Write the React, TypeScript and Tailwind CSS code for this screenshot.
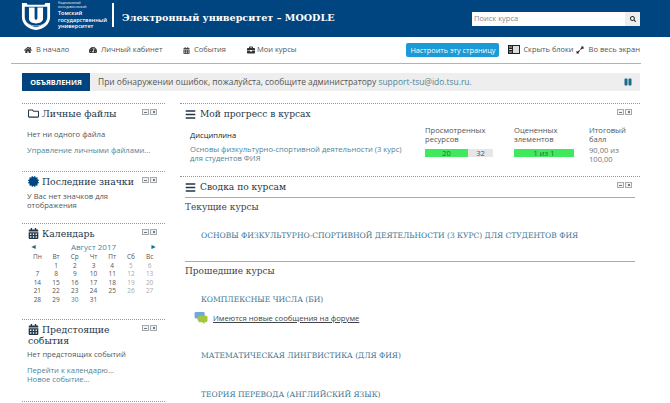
import { FaBars, FaBriefcase, FaCalendarAlt, FaCertificate, FaExpandAlt, FaHome, FaPause, FaRegFolder, FaSearch, FaTachometerAlt } from "react-icons/fa";
import type { ReactNode } from "react";

const serif = "font-['DejaVu_Serif',serif]";
const courseLink = `${serif} text-[7.55px] leading-[11px] text-[#3f7590]`;

function BlockControls() {
  return (
    <div className="flex gap-px pt-[1px]">
      <span className="flex h-[6px] w-[7px] items-center justify-center border border-[#a3abb0] bg-[#f2f2f2]">
        <span className="h-px w-[3px] bg-[#777]" />
      </span>
      <span className="flex h-[6px] w-[7px] items-center justify-center border border-[#a3abb0] bg-[#f2f2f2]">
        <span className="h-[2px] w-[2px] bg-[#777]" />
      </span>
    </div>
  );
}

function SideBlock({ icon, title, className, children }: { icon: ReactNode; title: string; className: string; children: ReactNode }) {
  return (
    <section className={`border-t border-dotted border-[#8f989d] px-[5px] ${className}`}>
      <div className="flex items-start justify-between pr-[3px] pl-px pt-[4px]">
        <h3 className={`${serif} w-[112px] text-[9.3px] leading-[11px] text-[#22364a]`}>
          <span className="mr-[3px] inline-block align-[-2px]">{icon}</span>
          {title}
        </h3>
        <BlockControls />
      </div>
      {children}
    </section>
  );
}

const days = [
  ["", "1", "2", "3", "4", "5", "6"],
  ["7", "8", "9", "10", "11", "12", "13"],
  ["14", "15", "16", "17", "18", "19", "20"],
  ["21", "22", "23", "24", "25", "26", "27"],
  ["28", "29", "30", "31", "", "", ""],
];

function CalendarGrid() {
  return (
    <div className="mt-[3px] px-px">
      <div className="flex items-center justify-between px-[2px] text-[8px] leading-[10px] text-[#4f8397]">
        <span className="text-[7px] text-[#1d6a8a]">◄</span>
        <span>Август 2017</span>
        <span className="text-[7px] text-[#1d6a8a]">►</span>
      </div>
      <div className="mt-px grid grid-cols-7 text-center text-[6.5px] leading-[8.6px] text-[#555]">
        {["Пн", "Вт", "Ср", "Чт", "Пт", "Сб", "Вс"].map((d) => (
          <span key={d}>{d}</span>
        ))}
        {days.flat().map((d, i) => (
          <span key={i} className={i % 7 >= 5 ? "text-[#aaa]" : d === "30" ? "text-[#4f8397]" : "text-[#555]"}>
            {d}
          </span>
        ))}
      </div>
    </div>
  );
}

function Logo() {
  return (
    <div className="flex h-full items-start">
      <svg width="30" height="31" viewBox="0 0 32 31" className="ml-[21px] mt-[1px]">
        <path d="M1 1h5l1 2h18l1-2h5v15c0 8-7 13-15 14C8 29 1 24 1 16z" fill="#fff" />
        <path d="M4 5h24v11c0 6-6 10-12 11C10 26 4 22 4 16z" fill="#00457f" />
        <path d="M8.500 6h6v11c0 2.500 3 2.500 3 0V6h6v12c0 6.500-15 6.500-15 0z" fill="#fff" />
        <path d="M7 23c5 3.500 13 3.500 18 0" stroke="#fff" strokeWidth="0.7" fill="none" />
      </svg>
      <div className="ml-[7px] w-[54px] pt-[1px] text-[5.5px] leading-[6.5px] font-semibold whitespace-nowrap text-white">
        <div className="mb-[1px] text-[3px] leading-[4px] font-normal">
          Национальный
          <br />
          исследовательский
        </div>
        Томский
        <br />
        государственный
        <br />
        университет
      </div>
      <div className="mt-[3px] h-[24px] w-[2px] bg-white" />
    </div>
  );
}

export default function App() {
  return (
    <div className="h-[403px] w-[670px] overflow-hidden bg-white font-['Open_Sans',sans-serif] text-[#555]">
      <header className="flex h-[37px] items-center bg-[#00457f]">
        <Logo />
        <span className={`${serif} ml-[8px] text-[9.6px] font-bold text-white`}>Электронный университет – MOODLE</span>
        <div className="ml-auto mr-[30px] flex h-[14px] w-[168px] items-center bg-white pl-[2px] text-[7.5px] text-[#888]">
          Поиск курса
          <span className="ml-auto flex h-full w-[15px] items-center justify-center bg-[#eee]">
            <FaSearch className="size-[6px] text-[#222]" />
          </span>
        </div>
      </header>

      <nav className="mx-[11px] flex h-[27px] w-[630px] items-center border-b border-[#a9b7bd] pl-[13px] pr-px text-[7.5px] text-[#555]">
        <span className="flex w-[65px] items-center gap-[4px]">
          <FaHome className="size-[8px] text-[#333]" />В начало
        </span>
        <span className="flex w-[94px] items-center gap-[4px]">
          <FaTachometerAlt className="size-[8px] text-[#333]" />
          Личный кабинет
        </span>
        <span className="flex w-[64px] items-center gap-[4px]">
          <FaCalendarAlt className="size-[7px] text-[#444]" />
          События
        </span>
        <span className="flex items-center gap-[2px]">
          <FaBriefcase className="size-[8px] text-[#333]" />
          Мои курсы
        </span>
        <span className="ml-auto rounded-[2px] bg-[#1a9ad6] px-[4px] py-[2px] text-[7.3px] leading-[10px] text-white">
          Настроить эту страницу
        </span>
        <span className="ml-[9px] flex items-center gap-[3px] text-[7.4px]">
          <svg width="12" height="9" viewBox="0 0 12 9">
            <rect width="12" height="9" fill="#222" />
            <path d="M1 2h3M1 4.500h3M1 7h3" stroke="#fff" strokeWidth="0.8" />
            <rect x="5" y="1" width="6" height="7" fill="#ddd" />
          </svg>
          Скрыть блоки
        </span>
        <span className="ml-[3px] flex items-center gap-[4px] text-[7.6px]">
          <FaExpandAlt className="size-[8px] text-[#222]" />
          Во весь экран
        </span>
      </nav>

      <div className="mx-[22px] mt-[9px] flex h-[18px] w-[618px] items-stretch text-[8.45px]">
        <div className="flex w-[68px] items-center justify-center bg-[#00457f] text-[7.3px] font-bold text-white">ОБЪЯВЛЕНИЯ</div>
        <div className="flex flex-1 items-center bg-[#eeeeee] px-[8px] text-[#555]">
          <span>
            При обнаружении ошибок, пожалуйста, сообщите администратору <span className="text-[#4f8397]">support-tsu@ido.tsu.ru.</span>
          </span>
          <FaPause className="ml-auto size-[8px] text-[#1d6a8a]" />
        </div>
      </div>

      <div className="mx-[22px] mt-[12px] flex gap-[15px]">
        <aside className="w-[143px] shrink-0 text-[7.6px] leading-[9px]">
          <SideBlock icon={<FaRegFolder className="size-[11px] text-[#22364a]" />} title="Личные файлы" className="h-[68px]">
            <p className="mt-[11px]">Нет ни одного файла</p>
            <p className="mt-[7px] text-[#4f8397]">Управление личными файлами...</p>
          </SideBlock>
          <SideBlock icon={<FaCertificate className="size-[11px] text-[#00457f]" />} title="Последние значки" className="h-[52px]">
            <p className="mt-[5px] pr-[10px]">У Вас нет значков для отображения</p>
          </SideBlock>
          <SideBlock icon={<FaCalendarAlt className="size-[11px] text-[#22364a]" />} title="Календарь" className="h-[96px]">
            <CalendarGrid />
          </SideBlock>
          <SideBlock icon={<FaCalendarAlt className="size-[11px] text-[#22364a]" />} title="Предстоящие события" className="h-[82px]">
            <p className="mt-[4px]">Нет предстоящих событий</p>
            <p className="mt-[7px] text-[#4f8397]">Перейти к календарю...</p>
            <p className="text-[#4f8397]">Новое событие...</p>
          </SideBlock>
          <div className="border-t border-dotted border-[#8f989d]" />
        </aside>

        <main className="w-[460px] text-[7.6px] leading-[9px]">
          <section className="h-[73px] border-t border-dotted border-[#8f989d] pl-[5px]">
            <div className="flex items-start justify-between pr-[8px] pt-[4px]">
              <h3 className={`${serif} flex items-center gap-[4px] text-[9.1px] leading-[12px] text-[#22364a]`}>
                <FaBars className="size-[11px] text-[#22364a]" />
                Мой прогресс в курсах
              </h3>
              <BlockControls />
            </div>
            <div className="mt-[6px] flex">
              <div className="w-[240px] pl-[5px] pt-[5px]">
                <p className="font-medium text-[#222]">Дисциплина</p>
                <p className="mt-[5px] w-[225px] text-[#4f8397]">Основы физкультурно-спортивной деятельности (3 курс) для студентов ФИЯ</p>
              </div>
              <div className="w-[89px]">
                <p>Просмотренных ресурсов</p>
                <div className="mt-[5px] flex h-[8px] w-[68px] text-center leading-[8px]">
                  <span className="w-[43px] bg-[#3fe85c]">20</span>
                  <span className="flex-1 bg-[#e6e6e6]">32</span>
                </div>
              </div>
              <div className="w-[75px]">
                <p>Оцененных элементов</p>
                <div className="mt-[5px] h-[8px] w-[60px] bg-[#3fe85c] text-center leading-[8px]">1 из 1</div>
              </div>
              <div className="w-[45px]">
                <p>Итоговый балл</p>
                <p className="mt-[2px] text-[#777]">90,00 из 100,00</p>
              </div>
            </div>
          </section>

          <section className="border-t border-dotted border-[#8f989d] px-[5px]">
            <div className="flex items-start justify-between pr-[3px] pt-[4px]">
              <h3 className={`${serif} flex items-center gap-[4px] text-[9.1px] leading-[12px] text-[#22364a]`}>
                <FaBars className="size-[11px] text-[#22364a]" />
                Сводка по курсам
              </h3>
              <BlockControls />
            </div>
            <div className={`${serif} mt-[4px] border-t border-[#9fb0b5] pt-[4px] text-[9px] leading-[11px] text-[#444]`}>Текущие курсы</div>
            <div className={`${courseLink} h-[48px] pl-[16px] pt-[17px]`}>ОСНОВЫ ФИЗКУЛЬТУРНО-СПОРТИВНОЙ ДЕЯТЕЛЬНОСТИ (3 КУРС) ДЛЯ СТУДЕНТОВ ФИЯ</div>
            <div className={`${serif} border-t border-[#9fb0b5] pt-[4px] text-[9px] leading-[11px] text-[#444]`}>Прошедшие курсы</div>
            <div className={`${courseLink} mt-[17px] pl-[16px]`}>КОМПЛЕКСНЫЕ ЧИСЛА (БИ)</div>
            <div className="mt-[7px] flex items-center pl-[9px]">
              <svg width="14" height="12" viewBox="0 0 14 13">
                <rect x="0" y="0" width="11" height="7" rx="1.500" fill="#6fa8dc" />
                <path d="M3 7h3l-2 3z" fill="#6fa8dc" />
                <rect x="4" y="4" width="10" height="7" rx="1.500" fill="#a4c639" />
                <path d="M8 11h3v2z" fill="#a4c639" />
              </svg>
              <span className="ml-[5px] text-[7.7px] text-[#444] underline">Имеются новые сообщения на форуме</span>
            </div>
            <div className={`${courseLink} mt-[26px] pl-[16px]`}>МАТЕМАТИЧЕСКАЯ ЛИНГВИСТИКА (ДЛЯ ФИЯ)</div>
            <div className={`${courseLink} mt-[28px] pl-[16px]`}>ТЕОРИЯ ПЕРЕВОДА (АНГЛИЙСКИЙ ЯЗЫК)</div>
          </section>
        </main>
      </div>
    </div>
  );
}
